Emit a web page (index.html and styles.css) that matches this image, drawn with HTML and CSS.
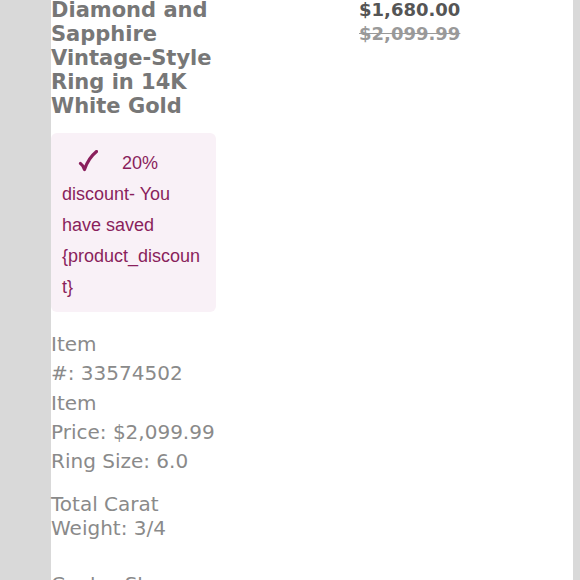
FILE: index.html
```html
<!DOCTYPE html>
<html>
<head>
<meta charset="utf-8">
<link rel="stylesheet" href="styles.css">
</head>
<body>
<div class="page">
  <div class="product">
    <div class="info">
      <h1 class="title">Diamond and Sapphire Vintage-Style Ring in 14K White Gold</h1>
      <div class="discount">
        <span class="check"><svg width="20" height="22" viewBox="0 0 20 22"><path d="M2.5 13.5 C4 14.5 5.5 16.5 6.5 19.5 C9 12 13 6 18.5 1.5" fill="none" stroke="currentColor" stroke-width="3.2" stroke-linecap="round" stroke-linejoin="round"/></svg></span><span class="pct">20%</span> discount- You have saved {product_discount}
      </div>
      <div class="meta">
        <div>Item #:&nbsp;33574502</div>
        <div>Item Price:&nbsp;$2,099.99</div>
        <div>Ring Size: 6.0</div>
      </div>
      <div class="carat">Total Carat Weight: 3/4</div>
      <div class="carat more">Center Stone: Sapphire</div>
    </div>
    <div class="prices">
      <div class="sale">$1,680.00</div>
      <div class="orig">$2,099.99</div>
    </div>
  </div>
</div>
</body>
</html>
```
FILE: styles.css
```css
html, body {
  margin: 0;
  padding: 0;
  height: 100%;
  overflow: hidden;
}
body {
  background: #d9d9d9;
}
.page {
  margin-left: 51px;
  width: 522px;
  min-height: 100%;
  background: #ffffff;
}
.product {
  display: flex;
  margin-top: -2px;
}
.info {
  width: 165px;
}
.title {
  margin: 0 0 15px;
  font-family: "DejaVu Sans", Verdana, sans-serif;
  font-weight: bold;
  font-size: 21px;
  line-height: 24px;
  color: #777777;
}
.discount {
  background: #f9f1f7;
  border-radius: 6px;
  padding: 15px 11px 9px;
  font-family: "Liberation Sans", Arial, sans-serif;
  font-size: 18px;
  line-height: 31px;
  color: #8a1f5c;
  overflow-wrap: anywhere;
}
.check {
  display: inline-block;
  margin-left: 16px;
  width: 44px;
  vertical-align: -3px;
  color: #8a1f5c;
}
.check svg {
  display: block;
}
.meta {
  margin-top: 18px;
  font-family: "DejaVu Sans", Verdana, sans-serif;
  font-size: 20px;
  line-height: 29.3px;
  color: #8a8a8a;
}
.carat {
  margin-top: 16px;
  font-family: "DejaVu Sans", Verdana, sans-serif;
  font-size: 20px;
  line-height: 24px;
  color: #8a8a8a;
}
.carat.more {
  margin-top: 32px;
}
.prices {
  margin-left: 143px;
  font-family: "DejaVu Sans", Verdana, sans-serif;
  font-weight: bold;
  font-size: 18px;
  line-height: 24px;
}
.sale {
  color: #555555;
}
.orig {
  color: #999999;
  text-decoration: line-through;
}
```
